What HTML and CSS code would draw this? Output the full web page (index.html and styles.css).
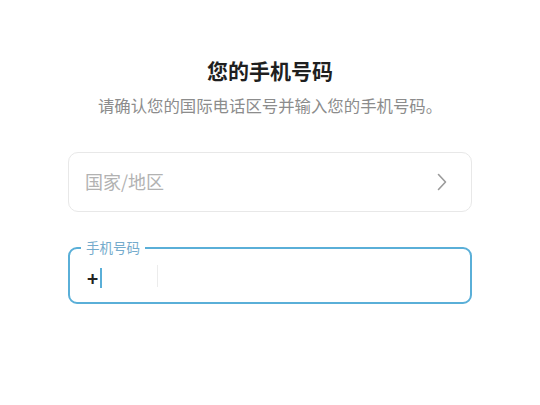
FILE: index.html
```html
<!DOCTYPE html>
<html lang="zh-CN">
<head>
<meta charset="utf-8">
<title>您的手机号码</title>
<link rel="stylesheet" href="styles.css">
</head>
<body>
<main class="page">
  <h1 class="title">您的手机号码</h1>
  <p class="subtitle">请确认您的国际电话区号并输入您的手机号码。</p>
  <div class="country">
    <span class="placeholder">国家/地区</span>
    <svg class="chevron" width="10" height="18" viewBox="0 0 10 18"><path d="M1.5 1.5 L8.5 9 L1.5 16.5" fill="none" stroke="#9a9a9a" stroke-width="1.6" stroke-linecap="round" stroke-linejoin="round"/></svg>
  </div>
  <div class="phone">
    <span class="phone-label">手机号码</span>
    <div class="code">
      <span class="plus">+</span><span class="cursor"></span>
    </div>
    <span class="divider"></span>
  </div>
</main>
</body>
</html>
```
FILE: styles.css
```css
* { box-sizing: border-box; }
html, body { margin: 0; padding: 0; background: #fff; }
body {
  font-family: "Noto Sans CJK SC", "Noto Sans", sans-serif;
  color: #1f1f1f;
}
.page {
  width: 404px;
  margin: 0 auto;
  padding-top: 56px;
  display: flex;
  flex-direction: column;
}
.title {
  margin: 0;
  font-size: 21px;
  line-height: 28px;
  font-weight: 700;
  text-align: center;
  color: #1f1f1f;
}
.subtitle {
  margin: 9px 0 0;
  font-size: 16.4px;
  line-height: 24px;
  text-align: center;
  color: #8c8c8c;
}
.country {
  margin-top: 35px;
  height: 60px;
  border: 1px solid #e8e8e8;
  border-radius: 10px;
  display: flex;
  align-items: center;
  justify-content: space-between;
  padding: 0 24px 0 16px;
}
.placeholder {
  font-size: 18px;
  line-height: 24px;
  margin-top: -3px;
  color: #b2b2b2;
}
.chevron { display: block; }
.phone {
  position: relative;
  margin-top: 35px;
  height: 57px;
  border: 2px solid #5aafd8;
  border-radius: 9px;
  display: flex;
  align-items: center;
  padding: 5px 0 0 17px;
}
.phone-label {
  position: absolute;
  left: 11px;
  top: -11px;
  padding: 0 5px;
  background: #fff;
  font-size: 13.5px;
  line-height: 18px;
  color: #74abcc;
}
.code {
  width: 70px;
  display: flex;
  align-items: center;
}
.plus {
  font-size: 19px;
  font-weight: 700;
  line-height: 20px;
  color: #222;
}
.cursor {
  width: 2px;
  height: 20px;
  margin-left: 2px;
  background: #5aafd8;
}
.divider {
  width: 1px;
  height: 22px;
  margin-top: -4px;
  background: #ececec;
}
```
